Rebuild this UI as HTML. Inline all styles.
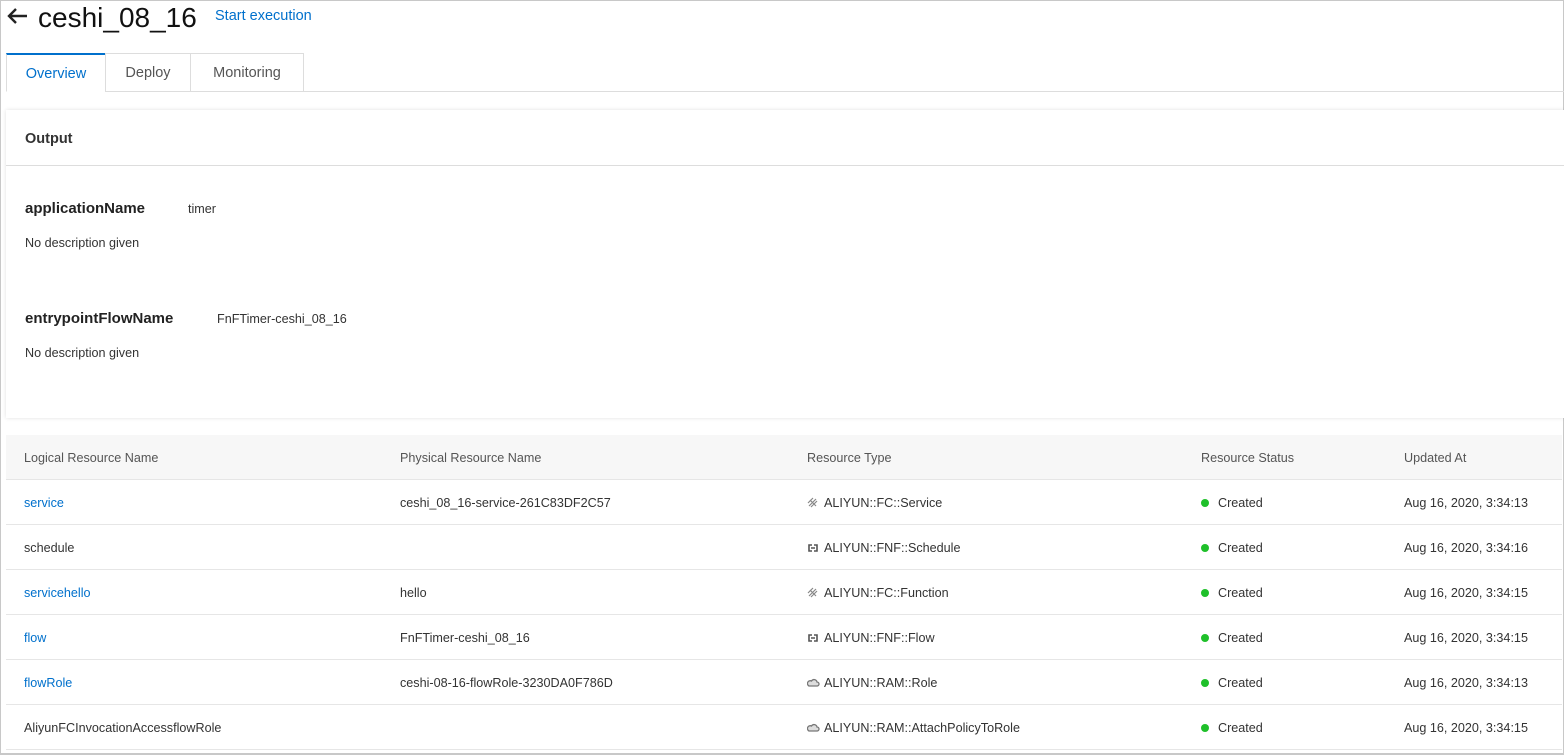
<!DOCTYPE html>
<html><head><meta charset="utf-8"><style>
*{box-sizing:border-box;margin:0;padding:0}
body{width:1564px;height:755px;overflow:hidden;background:#fff;font-family:"Liberation Sans",sans-serif;color:#333;font-size:12.6px;position:relative}
.frame{position:absolute;left:0;top:0;width:1564px;height:755px;border:1px solid #c8c8c8;border-bottom:2px solid #c8c8c8}
.abs{position:absolute;white-space:nowrap}
.title{left:38px;top:0;font-size:28px;color:#111;line-height:36px}
.link{color:#0070cc}
.tab{position:absolute;top:53px;height:39px;border:1px solid #ddd;font-size:14.5px;color:#555;text-align:center;line-height:39px;background:#fff}
.card{position:absolute;left:6px;top:110px;width:1558px;height:308px;background:#fff;box-shadow:0 0 4px rgba(0,0,0,.12)}
.hdr{position:absolute;left:6px;top:435px;width:1556px;height:45px;background:#f7f7f7;border-bottom:1px solid #e6e6e6}
.row{position:absolute;left:6px;width:1556px;height:45px;border-bottom:1px solid #e6e6e6}
.dot{display:inline-block;width:8px;height:8px;border-radius:50%;background:#1fc02a;margin-right:9px;vertical-align:0px}
.ic{position:absolute;left:801px;top:17px}
.rt{position:absolute;left:818px;top:16px;white-space:nowrap}
</style></head><body>
<div class="frame"></div>
<svg class="abs" style="left:6px;top:6px" width="24" height="20" viewBox="0 0 24 20"><path d="M21 10H3M10 3L3 10l7 7" fill="none" stroke="#222" stroke-width="2.4"/></svg>
<div class="abs title">ceshi_08_16</div>
<div class="abs link" style="left:215px;top:8px;font-size:14.5px">Start execution</div>
<div style="position:absolute;left:6px;top:91px;width:1558px;border-top:1px solid #ddd"></div>
<div class="tab" style="left:6px;width:100px;border-top:2px solid #0070cc;border-bottom-color:#fff;color:#0070cc">Overview</div>
<div class="tab" style="left:105px;width:86px">Deploy</div>
<div class="tab" style="left:190px;width:114px">Monitoring</div>
<div class="card">
<div class="abs" style="left:19px;top:21px;font-size:14.5px;font-weight:bold;color:#333">Output</div>
<div style="position:absolute;left:0;top:55px;width:1558px;border-top:1px solid #ddd"></div>
<div class="abs" style="left:19px;top:90px;font-size:15px;font-weight:bold;color:#222">applicationName</div>
<div class="abs" style="left:182px;top:92px">timer</div>
<div class="abs" style="left:19px;top:126px">No description given</div>
<div class="abs" style="left:19px;top:200px;font-size:15px;font-weight:bold;color:#222">entrypointFlowName</div>
<div class="abs" style="left:211px;top:202px">FnFTimer-ceshi_08_16</div>
<div class="abs" style="left:19px;top:236px">No description given</div>
</div>
<div class="hdr">
<div class="abs" style="left:18px;top:16px;color:#555">Logical Resource Name</div>
<div class="abs" style="left:394px;top:16px;color:#555">Physical Resource Name</div>
<div class="abs" style="left:801px;top:16px;color:#555">Resource Type</div>
<div class="abs" style="left:1195px;top:16px;color:#555">Resource Status</div>
<div class="abs" style="left:1398px;top:16px;color:#555">Updated At</div>
</div>
<svg width="0" height="0" style="position:absolute"><defs>
<g id="fc"><path d="M2 9L9 2M4 10L10 4M1 6L6 1M3 3l6 6" stroke="#888" stroke-width="1.2" fill="none"/></g>
<g id="fnf"><path d="M5 3H2v6h3M7 3h3v6H7M4 6h4" stroke="#555" stroke-width="1.6" fill="none"/></g>
<g id="ram"><path d="M2 9h8a2 2 0 0 0 0-4 3 3 0 0 0-5.5-1A2.5 2.5 0 0 0 2 9z" stroke="#777" stroke-width="1.3" fill="#ddd"/></g>
</defs></svg>
<div class="row" style="top:480px"><div class="abs link" style="left:18px;top:16px">service</div><div class="abs" style="left:394px;top:16px">ceshi_08_16-service-261C83DF2C57</div><svg class="ic" width="12" height="12"><use href="#fc"/></svg><div class="rt">ALIYUN::FC::Service</div><div class="abs" style="left:1195px;top:16px"><span class="dot"></span>Created</div><div class="abs" style="left:1398px;top:16px">Aug 16, 2020, 3:34:13</div></div>
<div class="row" style="top:525px"><div class="abs" style="left:18px;top:16px">schedule</div><svg class="ic" width="12" height="12"><use href="#fnf"/></svg><div class="rt">ALIYUN::FNF::Schedule</div><div class="abs" style="left:1195px;top:16px"><span class="dot"></span>Created</div><div class="abs" style="left:1398px;top:16px">Aug 16, 2020, 3:34:16</div></div>
<div class="row" style="top:570px"><div class="abs link" style="left:18px;top:16px">servicehello</div><div class="abs" style="left:394px;top:16px">hello</div><svg class="ic" width="12" height="12"><use href="#fc"/></svg><div class="rt">ALIYUN::FC::Function</div><div class="abs" style="left:1195px;top:16px"><span class="dot"></span>Created</div><div class="abs" style="left:1398px;top:16px">Aug 16, 2020, 3:34:15</div></div>
<div class="row" style="top:615px"><div class="abs link" style="left:18px;top:16px">flow</div><div class="abs" style="left:394px;top:16px">FnFTimer-ceshi_08_16</div><svg class="ic" width="12" height="12"><use href="#fnf"/></svg><div class="rt">ALIYUN::FNF::Flow</div><div class="abs" style="left:1195px;top:16px"><span class="dot"></span>Created</div><div class="abs" style="left:1398px;top:16px">Aug 16, 2020, 3:34:15</div></div>
<div class="row" style="top:660px"><div class="abs link" style="left:18px;top:16px">flowRole</div><div class="abs" style="left:394px;top:16px">ceshi-08-16-flowRole-3230DA0F786D</div><svg class="ic" width="13" height="12"><use href="#ram"/></svg><div class="rt">ALIYUN::RAM::Role</div><div class="abs" style="left:1195px;top:16px"><span class="dot"></span>Created</div><div class="abs" style="left:1398px;top:16px">Aug 16, 2020, 3:34:13</div></div>
<div class="row" style="top:705px"><div class="abs" style="left:18px;top:16px">AliyunFCInvocationAccessflowRole</div><svg class="ic" width="13" height="12"><use href="#ram"/></svg><div class="rt">ALIYUN::RAM::AttachPolicyToRole</div><div class="abs" style="left:1195px;top:16px"><span class="dot"></span>Created</div><div class="abs" style="left:1398px;top:16px">Aug 16, 2020, 3:34:15</div></div>
</body></html>
